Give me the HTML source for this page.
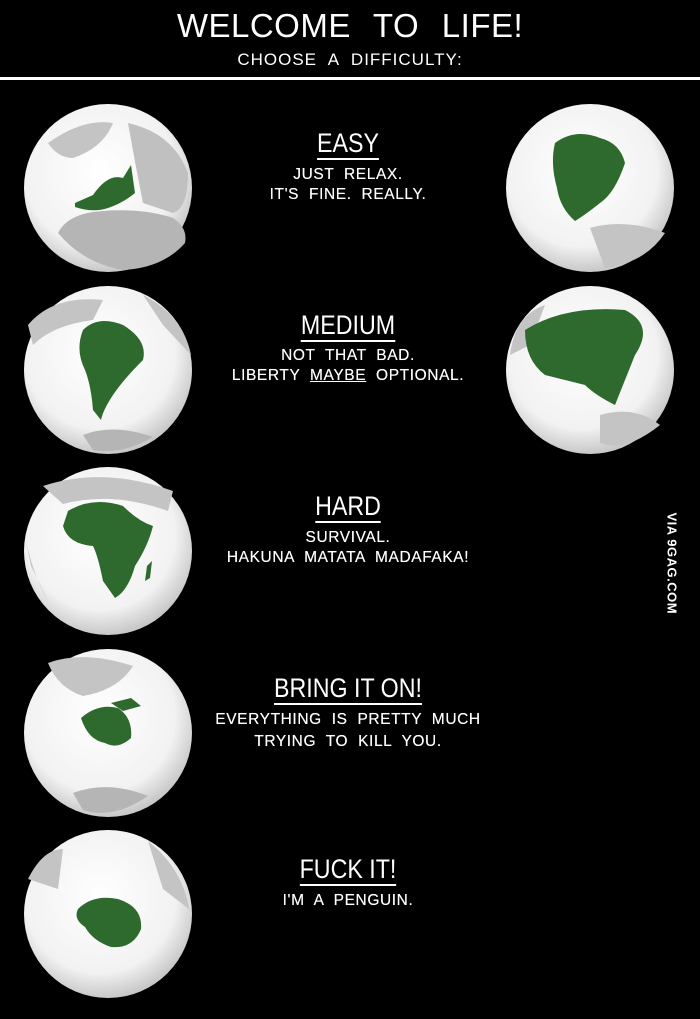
<!DOCTYPE html>
<html><head><meta charset="utf-8"><style>
body{margin:0;background:#000;width:700px;height:1019px;overflow:hidden;position:relative;font-family:"Liberation Sans",sans-serif;color:#fff}
.t{position:absolute;left:0;width:700px;text-align:center;white-space:nowrap}
.h{position:absolute;width:300px;left:198px;text-align:center;font-size:27px;line-height:28px;transform:scaleX(.86)}
.h span{border-bottom:2px solid #fff;padding-bottom:0px}
.b{position:absolute;width:360px;left:168px;text-align:center;font-size:15.5px;line-height:20px;word-spacing:5px;letter-spacing:.6px;text-shadow:0 0 .4px #fff}
svg.g{position:absolute;width:170px;height:170px}
</style></head><body>
<div class="t" style="top:7px;font-size:33px;word-spacing:13px;letter-spacing:.5px">WELCOME TO LIFE!</div>
<div class="t" style="top:50px;font-size:17px;word-spacing:6px;letter-spacing:1px">CHOOSE A DIFFICULTY:</div>
<div style="position:absolute;left:0;top:77px;width:700px;height:3px;background:#fff"></div>

<svg width="0" height="0" style="position:absolute"><defs>
<radialGradient id="rg" cx="45%" cy="40%" r="60%"><stop offset="0" stop-color="#fff"/><stop offset=".75" stop-color="#f2f2f2"/><stop offset="1" stop-color="#c8c8c8"/></radialGradient>
</defs></svg>

<!-- globe 1 Europe -->
<svg class="g" style="left:23px;top:103px" viewBox="0 0 170 170"><circle cx="85" cy="85" r="84" fill="url(#rg)"/>
<path d="M35 130 Q45 110 80 108 Q120 105 150 115 Q165 125 162 140 Q140 165 100 167 Q60 160 35 130Z" fill="#b5b5b5"/>
<path d="M105 20 Q150 30 165 70 Q165 105 150 110 L120 100 Q112 60 105 20Z" fill="#c0c0c0"/>
<path d="M25 40 Q60 15 90 20 Q80 45 50 55 Q35 55 25 40Z" fill="#c4c4c4"/>
<path d="M52 100 L70 92 Q85 70 100 75 L108 62 L112 90 Q100 100 85 105 Q70 110 52 104Z" fill="#2e6a2e"/></svg>
<!-- globe 2 S America -->
<svg class="g" style="left:23px;top:285px" viewBox="0 0 170 170"><circle cx="85" cy="85" r="84" fill="url(#rg)"/>
<path d="M5 40 Q30 10 80 15 L70 35 Q30 40 10 60Z" fill="#c4c4c4"/>
<path d="M120 10 Q160 30 168 70 L140 40Z" fill="#c4c4c4"/>
<path d="M60 150 Q90 138 130 152 Q100 170 70 165Z" fill="#b5b5b5"/>
<path d="M60 45 Q75 30 100 40 Q125 55 120 75 Q100 95 90 110 Q80 125 78 135 L70 125 Q68 100 62 85 Q52 65 60 45Z" fill="#2e6a2e"/></svg>
<!-- globe 3 Africa -->
<svg class="g" style="left:23px;top:466px" viewBox="0 0 170 170"><circle cx="85" cy="85" r="84" fill="url(#rg)"/>
<path d="M20 20 Q80 0 150 25 L145 45 Q90 25 40 38Z" fill="#c4c4c4"/>
<path d="M2 70 Q10 110 25 135 L8 100Z" fill="#c4c4c4"/>
<path d="M45 45 Q70 30 100 40 Q115 55 130 60 Q125 80 112 100 Q105 125 92 132 L80 115 Q75 90 70 80 Q45 78 40 60Z" fill="#2e6a2e"/>
<path d="M124 100 l5 -5 l-2 17 l-5 3Z" fill="#2e6a2e"/></svg>
<!-- globe 4 Australia -->
<svg class="g" style="left:23px;top:648px" viewBox="0 0 170 170"><circle cx="85" cy="85" r="84" fill="url(#rg)"/>
<path d="M25 15 Q60 2 110 18 Q95 42 60 48 Q35 40 25 15Z" fill="#c4c4c4"/>
<path d="M50 145 Q85 132 125 148 Q90 172 60 162Z" fill="#b5b5b5"/>
<path d="M88 55 l20 -5 l10 8 l-18 5Z" fill="#2e6a2e"/>
<path d="M58 70 Q75 55 95 60 Q110 70 108 90 Q95 102 82 95 Q65 92 58 70Z" fill="#2e6a2e"/></svg>
<!-- globe 5 Antarctica -->
<svg class="g" style="left:23px;top:829px" viewBox="0 0 170 170"><circle cx="85" cy="85" r="84" fill="url(#rg)"/>
<path d="M5 50 Q20 20 40 20 L35 60Z" fill="#c4c4c4"/>
<path d="M125 12 Q160 40 166 80 L140 60Z" fill="#c4c4c4"/>
<path d="M55 80 Q70 65 95 70 Q120 78 118 100 Q110 120 88 118 Q70 112 62 98 Q50 90 55 80Z" fill="#2e6a2e"/></svg>
<!-- globe R1 N America -->
<svg class="g" style="left:505px;top:103px" viewBox="0 0 170 170"><circle cx="85" cy="85" r="84" fill="url(#rg)"/>
<path d="M85 125 Q120 115 160 130 Q140 160 100 165Z" fill="#c4c4c4"/>
<path d="M50 40 Q70 25 95 35 Q115 40 120 60 Q110 90 95 100 Q80 112 70 118 Q55 105 52 85 Q45 60 50 40Z" fill="#2e6a2e"/></svg>
<!-- globe R2 Asia -->
<svg class="g" style="left:505px;top:285px" viewBox="0 0 170 170"><circle cx="85" cy="85" r="84" fill="url(#rg)"/>
<path d="M95 130 Q130 120 155 140 Q120 168 95 158Z" fill="#c4c4c4"/>
<path d="M5 70 Q10 30 40 20 L25 60Z" fill="#c4c4c4"/>
<path d="M20 45 Q60 20 120 25 Q150 40 130 70 Q120 95 110 120 Q90 110 80 100 Q60 95 40 90 Q20 75 20 45Z" fill="#2e6a2e"/></svg>

<div class="h" style="top:129px"><span>EASY</span></div>
<div class="b" style="top:165px">JUST RELAX.<br>IT'S FINE. REALLY.</div>
<div class="h" style="top:311px"><span>MEDIUM</span></div>
<div class="b" style="top:346px">NOT THAT BAD.<br>LIBERTY <span style="text-decoration:underline">MAYBE</span> OPTIONAL.</div>
<div class="h" style="top:492px"><span>HARD</span></div>
<div class="b" style="top:528px">SURVIVAL.<br>HAKUNA MATATA MADAFAKA!</div>
<div class="h" style="top:674px"><span>BRING IT ON!</span></div>
<div class="b" style="top:709px;line-height:22px">EVERYTHING IS PRETTY MUCH<br>TRYING TO KILL YOU.</div>
<div class="h" style="top:855px"><span>FUCK IT!</span></div>
<div class="b" style="top:891px">I'M A PENGUIN.</div>

<div style="position:absolute;left:622px;top:555px;width:100px;text-align:center;transform:rotate(90deg);font-size:13px;font-weight:bold;letter-spacing:.5px;white-space:nowrap">VIA 9GAG.COM</div>
</body></html>
